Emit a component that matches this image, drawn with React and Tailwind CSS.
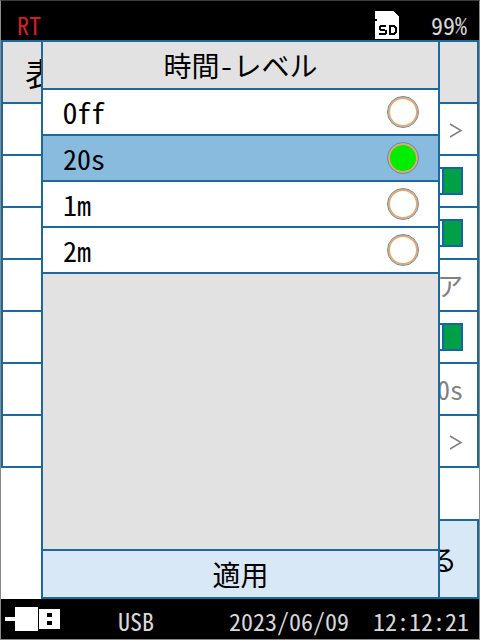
import React, { useState } from "react";

const options = ["Off", "20s", "1m", "2m"];

const settings = [
  { type: "link" },
  { type: "switch", label: "設定1" },
  { type: "switch", label: "設定2" },
  { type: "value", value: "リニア" },
  { type: "switch", label: "設定3" },
  { type: "value", value: "20s" },
  { type: "link" },
];

function SdCard() {
  return (
    <svg
      width="24"
      height="28"
      viewBox="0 0 24 28"
      shapeRendering="crispEdges"
      role="img"
      aria-label="SD"
    >
      <path d="M0 0h18l6 6v22H0V10h2V8H0z" fill="#fff" />
      <path
        d="M5 14h6v2H6v2h4v1h2v4h-1v1H4v-2h6v-2H5v-1H4v-4h1zM14 14h6v1h1v1h1v6h-1v1h-1v1h-6z"
        fill="#000"
      />
      <path d="M16 16h3v1h1v4h-1v1h-3z" fill="#fff" />
    </svg>
  );
}

function UsbPlug() {
  return (
    <svg
      width="55"
      height="24"
      viewBox="0 0 55 24"
      shapeRendering="crispEdges"
      aria-hidden="true"
    >
      <path d="M0 10h10V0h23v24H10V14H0z" fill="#fff" />
      <path d="M34 2h21v20H34z" fill="#fff" />
      <path d="M42 6h5v4h-5zM42 14h5v4h-5z" fill="#000" />
    </svg>
  );
}

function SettingRow({ item }) {
  return (
    <div className="flex h-[52px] items-center justify-end border-b-2 border-[#1b6a9b] pr-3.5 text-[26px] text-[#808080]">
      {item.type === "link" && (
        <svg width="14" height="18" viewBox="0 0 14 18" aria-hidden="true">
          <path
            d="M1 4L12 10.500L1 17"
            fill="none"
            stroke="#808080"
            strokeWidth="1.500"
          />
        </svg>
      )}
      {item.type === "value" && <span className="leading-8">{item.value}</span>}
      {item.type === "switch" && (
        <input
          type="checkbox"
          aria-label={item.label}
          defaultChecked
          className="flex h-7 w-12 appearance-none justify-end border-2 border-[#1565a5] bg-white before:w-[19px] before:border-l-2 before:border-[#1565a5] before:bg-[#00a046]"
        />
      )}
    </div>
  );
}

function App() {
  const [selected, setSelected] = useState("20s");

  return (
    <div className="flex min-h-screen flex-col border border-[#8a8a8a] border-t-[#3c3c3c] bg-white font-['Noto_Sans_CJK_JP',sans-serif] text-black">
      <header className="flex h-[39px] items-center justify-between bg-black pr-3 pl-4 text-[24px] text-[#d8d8d8]">
        <span className="mt-2 leading-8 text-[#d02024] [font-feature-settings:'hwid']">
          RT
        </span>
        <div className="mt-2 flex items-center gap-8">
          <SdCard />
          <span className="leading-8 [font-feature-settings:'hwid']">99%</span>
        </div>
      </header>

      <main className="relative flex flex-1 flex-col">
        <section className="border-2 border-b-0 border-[#1b6a9b]">
          <h1 className="flex h-[62px] items-center border-b-2 border-[#1b6a9b] bg-[#e2e2e2] pl-[22px] text-[32px]">
            表示
          </h1>
          <div className="[font-feature-settings:'hwid']">
            {settings.map((item, index) => (
              <SettingRow key={index} item={item} />
            ))}
          </div>
        </section>
        <button
          type="button"
          className="mt-auto h-20 w-1/3 self-end border-2 border-[#1b6a9b] bg-[#d9e8f6] pr-5 text-right text-[28px]"
        >
          戻る
        </button>

        <div
          role="dialog"
          aria-labelledby="dialog-title"
          className="absolute inset-y-0 right-[39px] left-10 flex flex-col border-2 border-[#1b6a9b] bg-[#e2e2e2]"
        >
          <h2
            id="dialog-title"
            className="flex h-12 items-center justify-center border-b-2 border-[#1b6a9b] text-[28px]"
          >
            時間<span className="[font-feature-settings:'hwid']">-</span>レベル
          </h2>
          {options.map((option) => (
            <label
              key={option}
              className="flex h-[46px] items-center justify-between border-b-2 border-[#1b6a9b] bg-white pr-5 pl-5 text-[28px] has-checked:bg-[#89bbdf]"
            >
              <span className="[font-feature-settings:'hwid','liga'_0]">
                {option}
              </span>
              <input
                type="radio"
                name="time-level"
                value={option}
                checked={selected === option}
                onChange={() => setSelected(option)}
                className="size-[30px] appearance-none rounded-full border-2 border-[#f0a766] bg-white outline-1 outline-[#5b8db0] checked:bg-[#00ec00]"
              />
            </label>
          ))}
          <button
            type="button"
            className="mt-auto flex h-12 items-center justify-center border-t-2 border-[#1b6a9b] bg-[#d9e8f6] text-[28px]"
          >
            適用
          </button>
        </div>
      </main>

      <footer className="flex h-10 items-center bg-black pr-2.5 pl-1 text-[24px] text-[#d8d8d8] [font-feature-settings:'hwid']">
        <UsbPlug />
        <span className="mt-1 ml-[58px]">USB</span>
        <div className="mt-1 ml-auto flex gap-6">
          <span>2023/06/09</span>
          <span>12:12:21</span>
        </div>
      </footer>
    </div>
  );
}

export default App;
